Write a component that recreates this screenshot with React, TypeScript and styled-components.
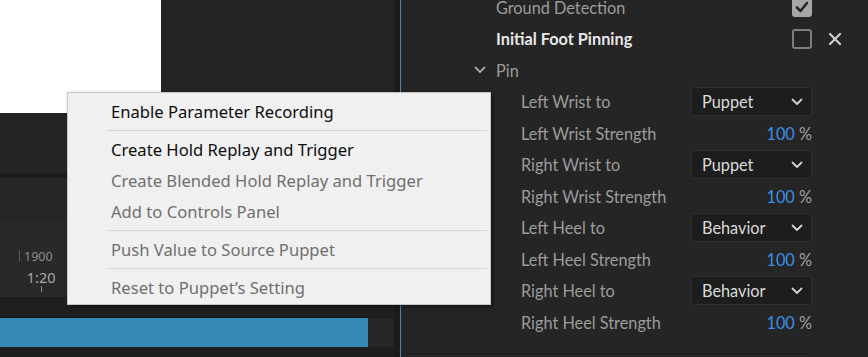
import React from "react";
import styled, { createGlobalStyle } from "styled-components";

const Global = createGlobalStyle`
  html, body { margin: 0; padding: 0; background: #252525; }
  body { width: 868px; height: 357px; overflow: hidden; }
`;

const Root = styled.div`
  position: relative;
  display: flex;
  width: 868px;
  height: 357px;
  overflow: hidden;
  background: #252525;
  font-family: "Lato", "Open Sans", sans-serif;
`;

/* ---------- Left (timeline) side ---------- */
const LeftPanel = styled.div`
  width: 394px;
  display: flex;
  flex-direction: column;
  flex-shrink: 0;
`;

const Band = styled.div<{ $h: number; $bg: string }>`
  height: ${(p) => p.$h}px;
  background: ${(p) => p.$bg};
  display: flex;
  flex-shrink: 0;
`;

const Preview = styled.div`
  width: 161px;
  background: #ffffff;
`;

const RulerBand = styled.div`
  height: 75px;
  background: #292929;
  display: flex;
  padding-left: 19px;
  padding-top: 28px;
  box-sizing: border-box;
`;

const RulerTick = styled.div`
  width: 1px;
  height: 11px;
  background: #5a5a5a;
  margin-right: 4px;
`;

const RulerLabels = styled.div`
  display: flex;
  flex-direction: column;
  align-items: flex-end;
  font-family: "Noto Sans", sans-serif;
`;

const FrameNum = styled.div`
  font-size: 12.5px;
  line-height: 14px;
  color: #8c8c8c;
  margin-right: 3px;
`;

const TimeNum = styled.div`
  font-size: 14.5px;
  line-height: 18px;
  color: #a8a8a8;
  margin-top: 4px;
`;

const TimeTick = styled.div`
  width: 1px;
  height: 6px;
  background: #8a8a8a;
  margin-right: 14px;
`;

const TrackBand = styled.div`
  height: 29px;
  display: flex;
  background: #262626;
  border-top: 1px solid #171717;
`;

const TrackBar = styled.div`
  width: 368px;
  background: #3689b5;
`;

/* ---------- Divider ---------- */
const Splitter = styled.div`
  width: 6px;
  background: #1b1b1b;
  flex-shrink: 0;
`;

/* ---------- Right (properties) side ---------- */
const RightPanel = styled.div`
  flex: 1;
  display: flex;
  flex-direction: column;
  border-left: 1px solid #4f82ba;
  background: #252525;
  position: relative;
`;

const PropList = styled.div`
  margin-top: -8.75px;
  display: flex;
  flex-direction: column;
  border-bottom: 1px solid #1b1b1b;
  margin-right: 56px;
  padding-bottom: 15px;
`;

const Row = styled.div<{ $indent: number }>`
  height: 31.5px;
  display: grid;
  grid-template-columns: 1fr auto;
  align-items: center;
  padding-left: ${(p) => p.$indent}px;
  position: relative;
`;

const Label = styled.div<{ $bright?: boolean }>`
  display: flex;
  align-items: center;
  font-size: 16.3px;
  color: ${(p) => (p.$bright ? "#e8e8e8" : "#9c9c9c")};
  font-weight: ${(p) => (p.$bright ? 700 : 400)};
  white-space: nowrap;
`;

const Caret = styled.svg`
  width: 12px;
  height: 8px;
  margin-left: -22px;
  margin-right: 10px;
`;

const Check = styled.div<{ $on?: boolean }>`
  width: 20px;
  height: 20px;
  box-sizing: border-box;
  border-radius: 3px;
  border: 2px solid ${(p) => (p.$on ? "#a6a6a6" : "#7e7e7e")};
  background: ${(p) => (p.$on ? "#a6a6a6" : "transparent")};
  display: flex;
  align-items: center;
  justify-content: center;
`;

const Remove = styled.svg`
  position: absolute;
  right: -30px;
  top: 50%;
  margin-top: -7px;
  width: 14px;
  height: 14px;
`;

const Select = styled.div`
  width: 121px;
  height: 29px;
  box-sizing: border-box;
  background: #1d1d1d;
  border: 1px solid #2f2f2f;
  border-radius: 3px;
  display: flex;
  align-items: center;
  justify-content: space-between;
  padding: 0 8px 0 10px;
  font-size: 16.3px;
  color: #dadada;
`;

const Value = styled.div`
  font-size: 16.3px;
  color: #a0a0a0;
  white-space: nowrap;
`;

const Num = styled.span`
  color: #3d8ee6;
`;

/* ---------- Context menu ---------- */
const Menu = styled.div`
  position: absolute;
  left: 67px;
  top: 92px;
  width: 424px;
  box-sizing: border-box;
  padding: 3px 0 1px;
  background: #f0f0f0;
  border: 1px solid #c6c6c6;
  box-shadow: 2px 2px 4px rgba(0, 0, 0, 0.45);
  font-family: "Noto Sans", "Open Sans", sans-serif;
`;

const MenuItem = styled.div<{ $disabled?: boolean }>`
  height: 31px;
  display: flex;
  align-items: center;
  padding-left: 43px;
  font-size: 16.6px;
  color: ${(p) => (p.$disabled ? "#6f6f6f" : "#0e0e0e")};
  white-space: nowrap;
`;

const MenuSep = styled.div`
  height: 1px;
  background: #d4d4d4;
  margin: 3px 3px 3px 39px;
`;

const Chevron = ({ color = "#d0d0d0" }: { color?: string }) => (
  <svg width="12" height="8" viewBox="0 0 12 8">
    <path d="M1.5 1.5 L6 6 L10.5 1.5" fill="none" stroke={color} strokeWidth="1.8" strokeLinecap="round" strokeLinejoin="round" />
  </svg>
);

type Prop =
  | { kind: "select"; label: string; value: string }
  | { kind: "pct"; label: string; value: number };

const pinProps: Prop[] = [
  { kind: "select", label: "Left Wrist to", value: "Puppet" },
  { kind: "pct", label: "Left Wrist Strength", value: 100 },
  { kind: "select", label: "Right Wrist to", value: "Puppet" },
  { kind: "pct", label: "Right Wrist Strength", value: 100 },
  { kind: "select", label: "Left Heel to", value: "Behavior" },
  { kind: "pct", label: "Left Heel Strength", value: 100 },
  { kind: "select", label: "Right Heel to", value: "Behavior" },
  { kind: "pct", label: "Right Heel Strength", value: 100 },
];

const menu: ({ sep: true } | { text: string; disabled?: boolean })[] = [
  { text: "Enable Parameter Recording" },
  { sep: true },
  { text: "Create Hold Replay and Trigger" },
  { text: "Create Blended Hold Replay and Trigger", disabled: true },
  { text: "Add to Controls Panel", disabled: true },
  { sep: true },
  { text: "Push Value to Source Puppet", disabled: true },
  { sep: true },
  { text: "Reset to Puppet\u2019s Setting", disabled: true },
];

export default function App() {
  return (
    <Root>
      <Global />
      <LeftPanel>
        <Band $h={113} $bg="#232323">
          <Preview />
        </Band>
        <Band $h={60} $bg="#242424" />
        <Band $h={5} $bg="#1b1b1b" />
        <Band $h={44} $bg="#262626" />
        <RulerBand>
          <RulerTick />
          <RulerLabels>
            <FrameNum>1900</FrameNum>
            <TimeNum>1:20</TimeNum>
            <TimeTick />
          </RulerLabels>
        </RulerBand>
        <Band $h={20} $bg="#1f1f1f" />
        <TrackBand>
          <TrackBar />
        </TrackBand>
        <Band $h={10} $bg="#1e1e1e" />
      </LeftPanel>
      <Splitter />
      <RightPanel>
        <PropList>
          <Row $indent={95}>
            <Label>Ground Detection</Label>
            <Check $on>
              <svg width="14" height="12" viewBox="0 0 14 12">
                <path d="M2 6.5 L5.5 10 L12 2" fill="none" stroke="#262626" strokeWidth="2.6" strokeLinecap="round" strokeLinejoin="round" />
              </svg>
            </Check>
          </Row>
          <Row $indent={95}>
            <Label $bright>Initial Foot Pinning</Label>
            <Check />
            <Remove viewBox="0 0 14 14">
              <path d="M2 2 L12 12 M12 2 L2 12" stroke="#cfcfcf" strokeWidth="2.2" strokeLinecap="round" />
            </Remove>
          </Row>
          <Row $indent={95}>
            <Label>
              <Caret viewBox="0 0 12 8">
                <path d="M1.5 1.5 L6 6 L10.5 1.5" fill="none" stroke="#a4a4a4" strokeWidth="1.8" strokeLinecap="round" strokeLinejoin="round" />
              </Caret>
              Pin
            </Label>
          </Row>
          {pinProps.map((p) => (
            <Row $indent={120} key={p.label}>
              <Label>{p.label}</Label>
              {p.kind === "select" ? (
                <Select>
                  {p.value}
                  <Chevron />
                </Select>
              ) : (
                <Value>
                  <Num>{p.value}</Num> %
                </Value>
              )}
            </Row>
          ))}
        </PropList>
      </RightPanel>
      <Menu>
        {menu.map((m, i) =>
          "sep" in m ? (
            <MenuSep key={i} />
          ) : (
            <MenuItem key={i} $disabled={m.disabled}>
              {m.text}
            </MenuItem>
          )
        )}
      </Menu>
    </Root>
  );
}
